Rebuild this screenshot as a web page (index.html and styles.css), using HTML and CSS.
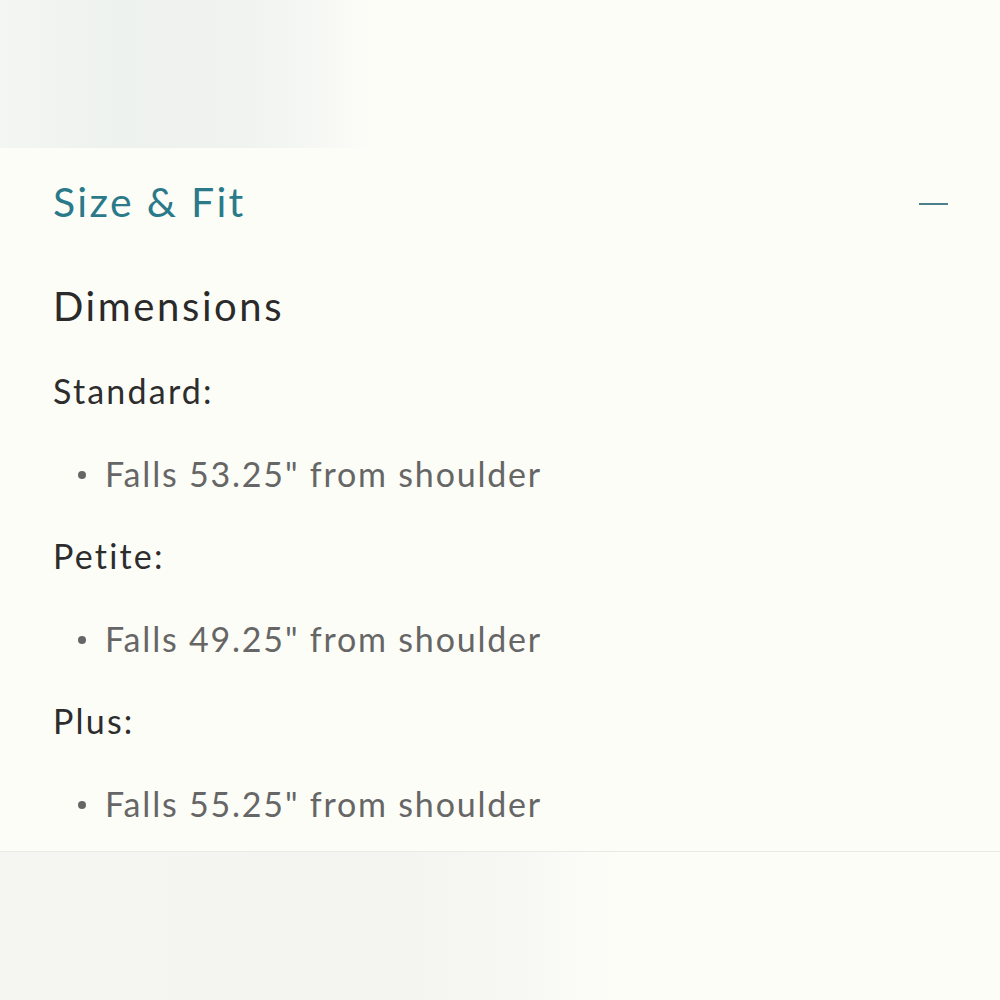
FILE: index.html
```html
<!DOCTYPE html>
<html>
<head>
<meta charset="utf-8">
<link rel="stylesheet" href="styles.css">
</head>
<body>
<div class="hero"></div>
<section class="panel">
  <div class="panel-head">
    <h2 class="panel-title">Size &amp; Fit</h2>
    <span class="minus"></span>
  </div>
  <h3 class="dims">Dimensions</h3>
  <p class="label">Standard:</p>
  <ul class="list"><li>Falls 53.25" from shoulder</li></ul>
  <p class="label">Petite:</p>
  <ul class="list"><li>Falls 49.25" from shoulder</li></ul>
  <p class="label">Plus:</p>
  <ul class="list"><li>Falls 55.25" from shoulder</li></ul>
</section>
<div class="footer"></div>
</body>
</html>
```
FILE: styles.css
```css
html, body {
  margin: 0;
  padding: 0;
}
body {
  height: 1000px;
  display: flex;
  flex-direction: column;
  background: #fdfdf8;
  font-family: "Lato", "Noto Sans", sans-serif;
  overflow: hidden;
}
.hero {
  height: 148px;
  flex: none;
  background: linear-gradient(to right, #f3f6f3 0%, #eef2ef 12%, #f0f3f0 25%, #f8f9f5 33%, #fdfdf8 38%);
}
.panel {
  flex: 1;
  padding: 0 52px 0 53px;
}
.panel-head {
  height: 107px;
  display: flex;
  align-items: center;
  justify-content: space-between;
}
.panel-title {
  margin: 0;
  font-size: 41px;
  line-height: 40px;
  font-weight: 400;
  color: #2a7a8a;
  letter-spacing: 2.3px;
}
.minus {
  width: 29px;
  height: 2px;
  margin-top: 5px;
  background: #4d7f8a;
}
.dims {
  margin: 31px 0 0;
  font-size: 40px;
  line-height: 40px;
  font-weight: 400;
  color: #2a2a2a;
  letter-spacing: 2.6px;
}
.label {
  margin: 24px 0 0;
  font-size: 34px;
  line-height: 82.5px;
  color: #2d2d2d;
  letter-spacing: 2.2px;
}
.label + .list {
  margin: 0;
}
.list + .label {
  margin-top: 0;
}
.list {
  list-style: none;
  padding: 0 0 0 25px;
}
.list li {
  font-size: 34px;
  line-height: 82.5px;
  color: #666666;
  letter-spacing: 1.8px;
}
.list li::before {
  content: "";
  display: inline-block;
  width: 8px;
  height: 8px;
  border-radius: 50%;
  background: #666;
  vertical-align: middle;
  margin-right: 19px;
  position: relative;
  top: -3px;
}
.footer {
  height: 148px;
  flex: none;
  border-top: 1px solid #e9e9e5;
  background: linear-gradient(to right, #f5f6f2 0%, #f4f5f1 40%, #f7f8f4 52%, #fdfdf8 62%);
}
```
